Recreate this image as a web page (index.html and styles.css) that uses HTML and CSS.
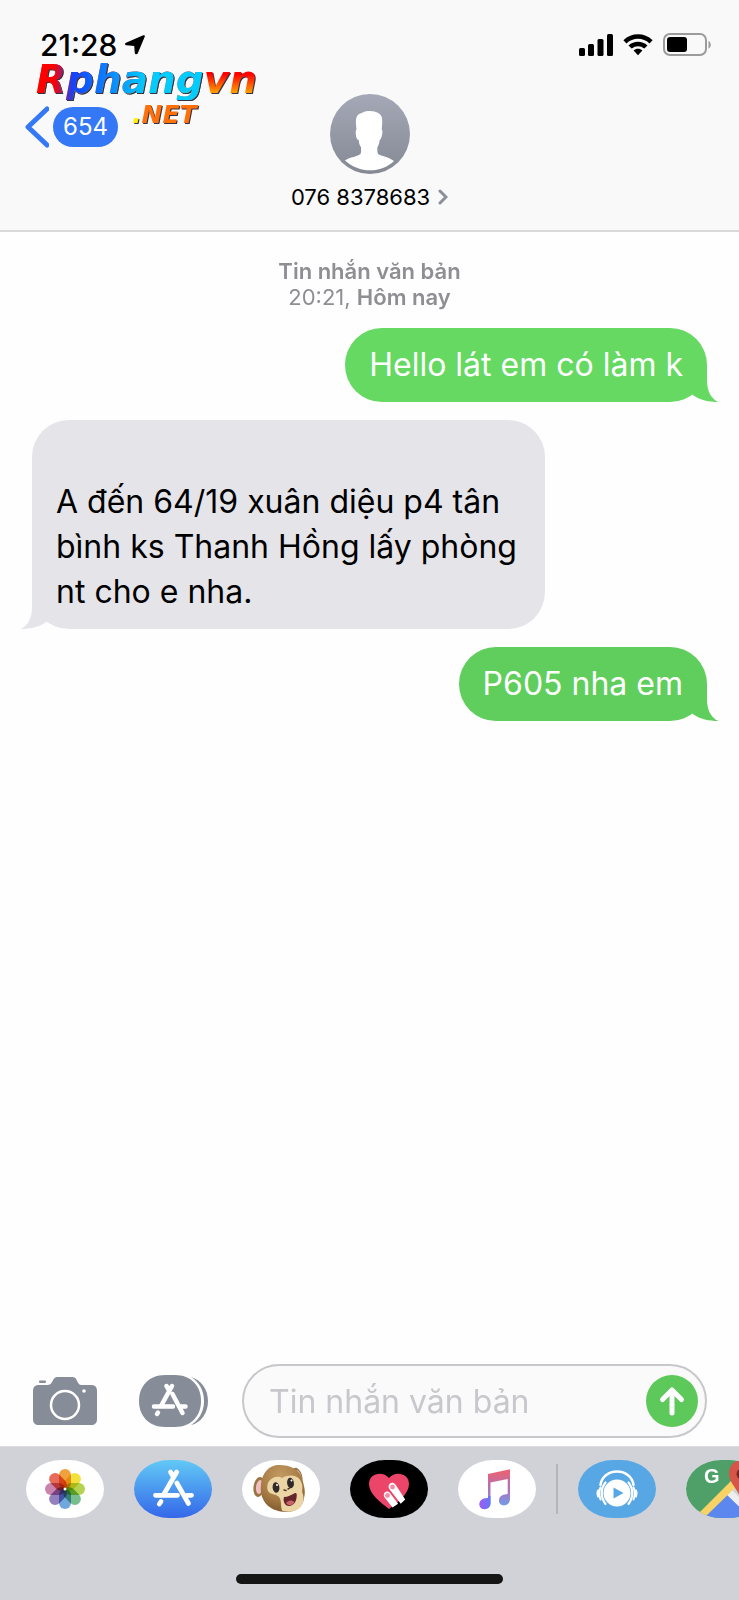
FILE: index.html
```html
<!DOCTYPE html>
<html lang="vi">

<head>
    <meta charset="UTF-8">
    <meta name="viewport" content="width=device-width, initial-scale=1.0">
    <title>Tin nhắn</title>
    <link rel="stylesheet" href="styles.css">
</head>

<body>

    <header class="header">
        <div class="status">
            <div class="status-time">
                <span>21:28</span>
                <svg width="20" height="20" viewBox="0 0 20 20"><path d="M19.8 1.500 12.800 18.300c-.6 1.500-2.800 1.400-3-.3L9.200 11 1.500 10.300C-.3 10-.4 8.300 1 7.700L18.300.3c1-.4 1.900.3 1.500 1.200z" /></svg>
            </div>
            <div class="status-icons">
                <svg width="34" height="22" viewBox="0 0 34 22">
                    <rect x="0" y="14" width="6" height="8" rx="1.500" />
                    <rect x="9" y="10" width="6" height="12" rx="1.500" />
                    <rect x="18.500" y="5" width="6" height="17" rx="1.500" />
                    <rect x="28" y="0" width="6" height="22" rx="1.500" />
                </svg>
                <svg width="30" height="22" viewBox="0 0 30 22">
                    <path d="M.4 6.200C8.500-1.600 21.500-1.600 29.600 6.200L26.500 9.400C20 3.200 10 3.200 3.500 9.400z" />
                    <path d="M5.500 11.400c5.300-5 13.700-5 19 0l-3.200 3.200c-3.500-3.300-9.100-3.300-12.600 0z" />
                    <path d="M10.600 16.500c2.500-2.200 6.300-2.200 8.800 0L15 21.300z" />
                </svg>
                <svg width="50" height="24" viewBox="0 0 50 24">
                    <rect x="1" y="1" width="42" height="21" rx="6" fill="none" stroke="#9b9b9b" stroke-width="2" />
                    <rect x="4" y="4" width="20" height="15" rx="3" />
                    <path d="M45.500 8c3 1 3 6.500 0 7.500z" fill="#9b9b9b" />
                </svg>
            </div>
        </div>

        <div class="logo">
            <div class="logo-name">Rphangvn</div>
            <div class="logo-net"><span>.</span>NET</div>
        </div>

        <nav class="nav">
            <a class="back" href="#">
                <svg width="24" height="42" viewBox="0 0 24 42"><path d="M22 3 3 21l19 18" /></svg>
                <span class="unread">654</span>
            </a>
            <a class="contact" href="#">
                <svg class="avatar" width="80" height="80" viewBox="0 0 80 80">
                    <defs>
                        <linearGradient id="gray" x2="0" y2="1">
                            <stop offset="0" stop-color="#a5a9b7" />
                            <stop offset="1" stop-color="#858994" />
                        </linearGradient>
                    </defs>
                    <circle cx="40" cy="40" r="40" fill="url(#gray)" />
                    <path fill="#fff" d="M15 66.500C20 63 28 62.500 30.500 60 31.500 58 31 54 31 53c-1.500-1.500-2-4-2.300-7-2.400-.5-2.800-4-3-7.500-.1-1.500.3-2.500.8-3-1-9-1-13 2.500-15.500 4-1.500 5-3 11-3 6.500 0 11.500 3 12 7 .6 4 0 8-.3 11.500.9.800.8 2 .6 3.500-.3 3-1 6-2.600 7-.4 3-1 5.500-2.300 7 0 2-.4 5 .7 7C51 62 59 63 64 67 51 79.500 29 79.500 15 66.500z" />
                </svg>
                <span class="contact-name">
                    076 8378683
                    <svg width="10" height="16" viewBox="0 0 10 16"><path d="m2 2 6 6-6 6" /></svg>
                </span>
            </a>
        </nav>
    </header>

    <main class="chat">
        <div class="date"><b>Tin nhắn văn bản</b><br>20:21, <b>Hôm nay</b></div>

        <div class="bubble sent">Hello lát em có làm k
            <svg class="tail" viewBox="0 0 40 40"><path d="M28 3V18C28 29 32 37 39.500 40 30 40 21 38 14.500 33.500L8 28z" /></svg>
        </div>
        <div class="bubble received"><br>A đến 64/19 xuân diệu p4 tân bình ks Thanh Hồng lấy phòng nt cho e nha.
            <svg class="tail" viewBox="0 0 40 40"><path d="M28 3V18C28 29 32 37 39.500 40 30 40 21 38 14.500 33.500L8 28z" /></svg>
        </div>
        <div class="bubble sent last">P605 nha em
            <svg class="tail" viewBox="0 0 40 40"><path d="M28 3V18C28 29 32 37 39.500 40 30 40 21 38 14.500 33.500L8 28z" /></svg>
        </div>
    </main>

    <form class="composer">
        <button type="button" class="icon-btn" aria-label="Camera">
            <svg width="64" height="48" viewBox="0 0 64 48">
                <path fill="#868d99" d="M6 8h8c3 0 4-1 5-3 2-4 3-5 6-5h14c3 0 4 1 5 4 2 3 2 4 5 4h9c4 0 6 2 6 6v28c0 4-2 6-6 6H6c-4 0-6-2-6-6V14c0-4 2-6 6-6z" />
                <rect x="6" y="3.500" width="7" height="2.500" rx="1" fill="#868d99" />
                <circle cx="32" cy="28" r="14" fill="none" stroke="#fff" stroke-width="2.500" />
                <circle cx="51" cy="14" r="1.800" fill="#fff" />
            </svg>
        </button>
        <button type="button" class="icon-btn" aria-label="Ứng dụng">
            <svg width="70" height="52" viewBox="0 0 70 52">
                <path fill="#868d99" d="M26 0h10c16 0 26 11 26 26S52 52 36 52H26C10 52 0 41 0 26S10 0 26 0z" />
                <path fill="#868d99" d="M52 2c10 3 17 12 17 24S62 48 52 50c8-5 13-13 13-24S60 7 52 2z" />
                <g fill="none" stroke="#fff" stroke-width="4.500" stroke-linecap="round">
                    <path d="M33 11 22 31M27.500 11l3 5M33.500 19 43.500 38M15 31.500H34M42 31.500h4.500M19 37.500l-1 1.500" />
                </g>
            </svg>
        </button>
        <div class="field">
            <input type="text" placeholder="Tin nhắn văn bản" aria-label="Tin nhắn văn bản">
            <button type="button" class="send" aria-label="Gửi">
                <svg width="52" height="52" viewBox="0 0 52 52"><path d="M26 38V15M16.500 24.500 26 15l9.500 9.500" /></svg>
            </button>
        </div>
    </form>

    <footer class="drawer">
        <div class="apps">
            <button class="app" aria-label="Ảnh">
                <svg viewBox="0 0 78 58">
                    <g class="petals" transform="translate(39 29)">
                        <rect x="-6" y="-20" width="12" height="20" rx="6" fill="#f0a03c" />
                        <rect x="-6" y="-20" width="12" height="20" rx="6" fill="#f2e03c" transform="rotate(45)" />
                        <rect x="-6" y="-20" width="12" height="20" rx="6" fill="#b5d350" transform="rotate(90)" />
                        <rect x="-6" y="-20" width="12" height="20" rx="6" fill="#78bd8e" transform="rotate(135)" />
                        <rect x="-6" y="-20" width="12" height="20" rx="6" fill="#70a7dc" transform="rotate(180)" />
                        <rect x="-6" y="-20" width="12" height="20" rx="6" fill="#9480bd" transform="rotate(225)" />
                        <rect x="-6" y="-20" width="12" height="20" rx="6" fill="#c983ac" transform="rotate(270)" />
                        <rect x="-6" y="-20" width="12" height="20" rx="6" fill="#e66b5b" transform="rotate(315)" />
                    </g>
                    <circle cx="39" cy="29" r="1.500" fill="#fff" />
                </svg>
            </button>
            <button class="app store" aria-label="App Store">
                <svg viewBox="0 0 78 58">
                    <path fill="none" stroke="#fff" stroke-width="4.800" stroke-linecap="round" d="M42.700 12 30 34M36.500 12l3 5M42.800 23 54.500 43.500M21.500 35.300H43.500M53 35.300h4.500M27 41.500l-1.700 2.500" />
                </svg>
            </button>
            <button class="app" aria-label="Animoji">
                <svg viewBox="0 0 78 58">
                    <defs>
                        <radialGradient id="fur" cx=".45" cy=".25" r=".8">
                            <stop offset="0" stop-color="#c49a63" />
                            <stop offset=".6" stop-color="#a57a43" />
                            <stop offset="1" stop-color="#7b562c" />
                        </radialGradient>
                    </defs>
                    <ellipse cx="17" cy="27" rx="5.500" ry="10" fill="#9b7445" transform="rotate(8 17 27)" />
                    <ellipse cx="17.500" cy="27" rx="3.500" ry="7" fill="#f2bfc0" transform="rotate(8 17.500 27)" />
                    <ellipse cx="55" cy="16" rx="5" ry="8.500" fill="#9b7445" transform="rotate(-18 55 16)" />
                    <ellipse cx="56" cy="16" rx="3" ry="6" fill="#f2bfc0" transform="rotate(-18 56 16)" />
                    <path fill="url(#fur)" d="M37 5C27 5 20 13 19 24c-1 6 0 12 3 17 4 7 13 11 22 11 11 0 17-6 18-14 2-7 0-12-2-20C57 9 48 5 37 5z" />
                    <path fill="#ecd5a5" d="M40 18c-5-3-13 0-14.500 7-1 5 1 8 5 9 4 1 7 2 8 6 1 4 0 8 2 11 7 2 15 0 18-4 3-4 4-9 2-14-1-3 1-6-1-10-2-7-10-10-19.500-5z" />
                    <ellipse cx="34" cy="27.500" rx="3.400" ry="5.200" fill="#302b28" transform="rotate(-8 34 27.500)" />
                    <ellipse cx="48.500" cy="23" rx="3.400" ry="5.200" fill="#302b28" transform="rotate(-8 48.500 23)" />
                    <circle cx="35" cy="25" r="1" fill="#fff" />
                    <circle cx="49.500" cy="20.500" r="1" fill="#fff" />
                    <path d="m42 30 2 .5M46 29l1.500-.8" stroke="#4f3826" stroke-width="1.500" stroke-linecap="round" />
                    <path fill="#65252a" d="M42 37c4 0 7-2 11-4 2-.5 2 2 1.500 5-.5 4-3 7.500-7 8-4.500.4-7-5-5.500-9z" />
                    <path fill="#c8656a" d="M44 43c2-3 6-3.500 8.500-1-1.500 3-5.500 5-8.500 1z" />
                </svg>
            </button>
            <button class="app touch" aria-label="Digital Touch">
                <svg viewBox="0 0 78 58">
                    <path fill="#eb4569" d="M39 49C31 43 19 34 19 24c0-11 14-13.500 20-6 6-7.500 20-5 20 6 0 10-12 19-20 25z" />
                    <path fill="#fff" d="m39.700 29.600 11 14.200 4.500-4.300L45.500 24.600c-3.500-4.500-9.300.3-5.800 5zM35 38l7.500 9.500 5.600-3.700L40 33c-3.700-4.200-8.500.800-5 5z" />
                    <circle cx="42.500" cy="27" r="2.400" fill="#f48da3" />
                    <circle cx="37.500" cy="35.500" r="2.400" fill="#f48da3" />
                </svg>
            </button>
            <button class="app" aria-label="Nhạc">
                <svg viewBox="0 0 78 58">
                    <defs>
                        <linearGradient id="music" x1=".5" x2=".5" y2="1">
                            <stop offset="0" stop-color="#f0606a" />
                            <stop offset=".5" stop-color="#b071bb" />
                            <stop offset="1" stop-color="#65a5f5" />
                        </linearGradient>
                        <linearGradient id="note">
                            <stop offset="0" stop-color="#a458f2" />
                            <stop offset="1" stop-color="#6179fa" />
                        </linearGradient>
                    </defs>
                    <path fill="url(#music)" d="M30 14 52 9.200V39c0 8-11 8.500-11 1.500C41 35 46 34.500 49.700 34V19L32.500 22.500V43c0 8-11 8-11 1.500C21.500 39 26 38.500 30 38z" />
                    <path fill="url(#note)" d="M32.500 36v7c0 8-11 8-11 1.500C21.500 39 26 38.500 30 38v-2z" />
                </svg>
            </button>
            <span class="divider"></span>
            <button class="app player" aria-label="Nghe nhạc">
                <svg viewBox="0 0 78 58">
                    <circle cx="39" cy="33" r="13.500" fill="#fff" />
                    <path fill="#58a7e5" d="m35.500 27.500 10 5.500-10 5.500z" />
                    <g fill="none" stroke="#fff" stroke-linecap="round">
                        <path stroke-width="2.500" d="M22.500 25c1-8 8-13.500 16.500-13.500S54.500 17 55.500 25" />
                        <path stroke-width="2.200" d="M27.500 22.500c-5 6-5 15 0 21.500M50.500 22.500c5 6 5 15 0 21.500" />
                        <path stroke-width="2" d="M22.500 27.500c-1.500 3-1.500 8 0 12M55.500 27.500c1.500 3 1.500 8 0 12M20 30.500c-1 2-1 4 0 6M58 30.500c1 2 1 4 0 6" />
                    </g>
                </svg>
            </button>
            <button class="app maps" aria-label="Google Maps">
                <svg viewBox="0 0 78 58">
                    <path fill="#4f9f68" d="M0 0h78v58H0z" />
                    <path fill="#5b87ee" d="M18 58 41 34l24 24z" />
                    <path fill="#d2d3d7" d="m41 34 9-9 28 28v5H65z" />
                    <path fill="#eee" d="m39 33 5-5 30 30h-9z" />
                    <path fill="#f8d265" d="M10 56 53 13l5 6-40 39z" />
                    <path fill="#d65548" d="M56 0c-8 0-13 6-13 14 0 9 10 16 13 28 3-12 13-19 13-28 0-8-5-14-13-14z" />
                    <circle cx="56" cy="14" r="5.500" fill="#7d251d" />
                    <text x="18" y="23" class="g">G</text>
                </svg>
            </button>
        </div>
        <div class="home-bar"></div>
    </footer>

</body>

</html>
```
FILE: styles.css
```css
* {
    box-sizing: border-box;
}

body {
    margin: 0;
    min-height: 100vh;
    display: flex;
    flex-direction: column;
    background: #fefefe;
    color: #000;
    font-family: Inter, "Noto Sans", sans-serif;
    overflow-x: hidden;
}

a {
    color: inherit;
    text-decoration: none;
}

button {
    padding: 0;
    border: none;
    background: none;
    cursor: pointer;
}

svg {
    display: block;
    flex: none;
}

/* header */
.header {
    position: relative;
    background: #f9f9f9;
    border-bottom: 2px solid #d9d9db;
    padding-bottom: 18px;
}

.status {
    display: flex;
    justify-content: space-between;
    align-items: flex-start;
    padding: 28px 26px 0 40px;
}

.status-time {
    display: flex;
    align-items: center;
    gap: 8px;
    font-size: 30px;
    font-weight: 500;
    line-height: 34px;
}

.status-icons {
    display: flex;
    align-items: center;
    gap: 10px;
    height: 34px;
}

.logo {
    position: absolute;
    left: 36px;
    top: 60px;
    z-index: 1;
    font-family: "DejaVu Sans", sans-serif;
    font-weight: bold;
    font-style: italic;
    filter: drop-shadow(1px 1px 0 #334);
}

.logo-name {
    font-size: 39px;
    line-height: 40px;
    color: transparent;
    background: linear-gradient(90deg, #f00 8%, #14f 17%, #0cf 50%, #0cf 75%, transparent 75%), linear-gradient(#f00 35%, #f90 80%);
    -webkit-background-clip: text;
    background-clip: text;
}

.logo-net {
    padding-left: 96px;
    margin-top: 3px;
    font-size: 25px;
    line-height: 24px;
    color: #ff6f0a;
}

.logo-net span {
    color: #fe0;
}

.nav {
    display: grid;
    grid-template-columns: 1fr auto 1fr;
    align-items: start;
    padding: 32px 25px 0;
}

.back {
    display: flex;
    align-items: center;
    gap: 4px;
    margin-top: 12px;
}

.back path {
    fill: none;
    stroke: #3478f6;
    stroke-width: 5;
    stroke-linecap: round;
    stroke-linejoin: round;
}

.unread {
    padding: 0 10px;
    border-radius: 20px;
    background: #3478f6;
    color: #fff;
    font-size: 24px;
    line-height: 40px;
}

.contact {
    display: flex;
    flex-direction: column;
    align-items: center;
    gap: 8px;
}

.contact-name {
    display: flex;
    align-items: center;
    gap: 8px;
    font-size: 22px;
    line-height: 30px;
}

.contact-name path {
    fill: none;
    stroke: #8a8f9a;
    stroke-width: 3;
    stroke-linecap: round;
}

/* messages */
.chat {
    flex: 1;
    display: flex;
    flex-direction: column;
    align-items: flex-start;
    gap: 18px;
    padding: 26px 32px;
}

.date {
    align-self: center;
    text-align: center;
    color: #8e8e93;
    font-size: 22px;
    line-height: 26px;
}

.date b {
    font-weight: 600;
}

.bubble {
    position: relative;
    max-width: 76%;
    padding: 14px 24px 15px;
    border-radius: 37px;
    font-size: 32px;
    line-height: 45px;
}

.sent {
    align-self: flex-end;
    background: #65d962;
    color: #fff;
    fill: #65d962;
}

.last {
    background: #5fce5c;
    fill: #5fce5c;
}

.received {
    background: #e5e4e9;
    fill: #e5e4e9;
}

.tail {
    position: absolute;
    right: -12px;
    bottom: 0;
    width: 40px;
    height: 40px;
}

.received .tail {
    right: auto;
    left: -12px;
    transform: scaleX(-1);
}

/* composer */
.composer {
    display: flex;
    align-items: center;
    padding: 0 32px 8px 33px;
}

.icon-btn {
    margin-right: 42px;
}

.icon-btn + .icon-btn {
    margin-right: 33px;
}

.field {
    flex: 1;
    min-width: 0;
    display: flex;
    align-items: center;
    height: 74px;
    padding: 0 7px 0 25px;
    border: 2px solid #c7c7cc;
    border-radius: 37px;
    background: #fafafa;
}

.field input {
    flex: 1;
    min-width: 0;
    padding: 0;
    border: none;
    outline: none;
    background: none;
    font-family: inherit;
    font-size: 32px;
    line-height: 45px;
}

.field input::placeholder {
    color: #c7c7cc;
}

.send {
    border-radius: 50%;
    background: #5dc95a;
}

.send path {
    fill: none;
    stroke: #fff;
    stroke-width: 5;
    stroke-linecap: round;
    stroke-linejoin: round;
}

/* app drawer */
.drawer {
    background: #d1d2d8;
    border-top: 1px solid #dcdce0;
    padding: 13px 0 16px;
}

.apps {
    display: flex;
    align-items: center;
    gap: 30px;
    padding-left: 26px;
    overflow: hidden;
}

.app {
    flex: none;
    width: 78px;
    height: 58px;
    border-radius: 35px / 29px;
    background: #fff;
    overflow: hidden;
}

.petals rect {
    mix-blend-mode: multiply;
}

.store {
    background: linear-gradient(#62c9f5, #3467e9);
}

.touch {
    background: #000;
}

.player {
    background: #58a7e5;
}

.g {
    fill: #fff;
    font-size: 20px;
    font-weight: 700;
}

.divider {
    flex: none;
    width: 2px;
    height: 50px;
    margin: 0 -10px;
    background: #b4b5bb;
}

.home-bar {
    width: 36%;
    height: 10px;
    margin: 56px auto 0;
    border-radius: 5px;
    background: #151515;
}
```
